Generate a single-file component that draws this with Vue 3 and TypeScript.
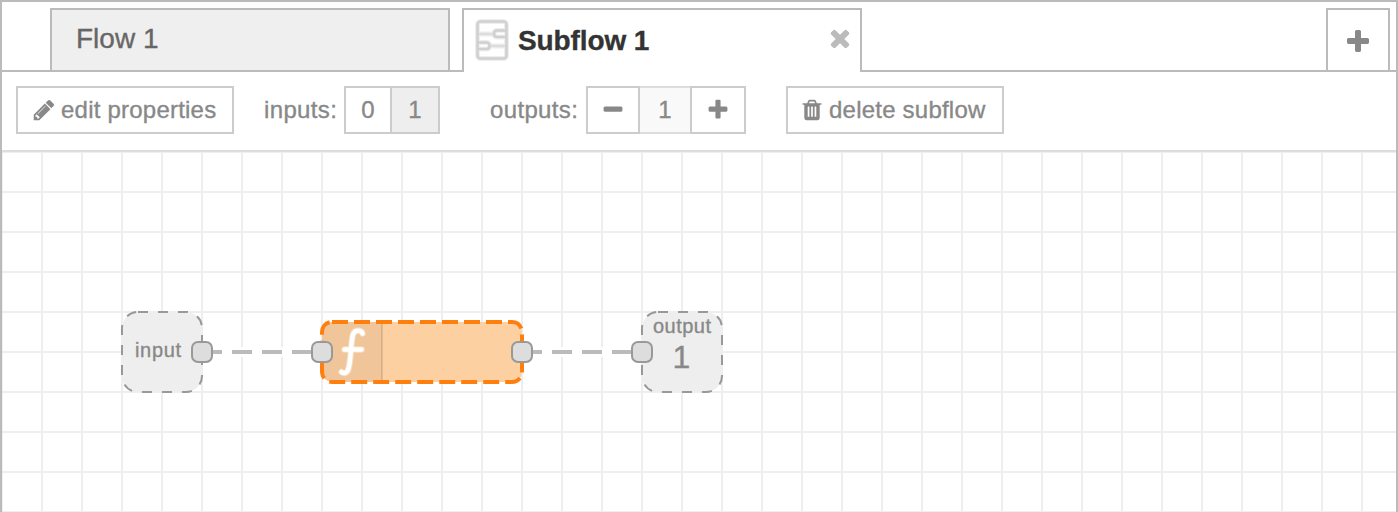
<script setup lang="ts">
import { ref } from 'vue'

interface Port { x: number; y: number }

const inputs = ref(1)
const outputs = ref(1)
const ports: Port[] = [
  { x: 202, y: 352 },
  { x: 322, y: 352 },
  { x: 522, y: 352 },
  { x: 642, y: 352 },
]
const columns = Array.from({ length: 35 }, (_, i) => 2 + i * 40)
const rows = Array.from({ length: 10 }, (_, i) => 152 + i * 40)

const icons = {
  pencil: 'M491 1536l91-91-235-235-91 91v107h128v128h107zm523-928q0-22-22-22-10 0-17 7l-542 542q-7 7-7 17 0 22 22 22 10 0 17-7l542-542q7-7 7-17zm-54-192l416 416-832 832h-416v-416zm683 96q0 53-37 90l-166 166-416-416 166-165q36-38 90-38 53 0 91 38l235 234q37 39 37 91z',
  plus: 'M1600 736v192q0 40-28 68t-68 28h-416v416q0 40-28 68t-68 28h-192q-40 0-68-28t-28-68v-416h-416q-40 0-68-28t-28-68v-192q0-40 28-68t68-28h416v-416q0-40 28-68t68-28h192q40 0 68 28t28 68v416h416q40 0 68 28t28 68z',
  minus: 'M1600 736v192q0 40-28 68t-68 28h-1216q-40 0-68-28t-28-68v-192q0-40 28-68t68-28h1216q40 0 68 28t28 68z',
  times: 'M1490 1322q0 40-28 68l-136 136q-28 28-68 28t-68-28l-294-294-294 294q-28 28-68 28t-68-28l-136-136q-28-28-28-68t28-68l294-294-294-294q-28-28-28-68t28-68l136-136q28-28 68-28t68 28l294 294 294-294q28-28 68-28t68 28l136 136q28 28 28 68t-28 68l-294 294 294 294q28 28 28 68z',
  trash: 'M704 1376v-704q0-14-9-23t-23-9h-64q-14 0-23 9t-9 23v704q0 14 9 23t23 9h64q14 0 23-9t9-23zm256 0v-704q0-14-9-23t-23-9h-64q-14 0-23 9t-9 23v704q0 14 9 23t23 9h64q14 0 23-9t9-23zm256 0v-704q0-14-9-23t-23-9h-64q-14 0-23 9t-9 23v704q0 14 9 23t23 9h64q14 0 23-9t9-23zm-544-992h448l-48-117q-7-9-17-11h-317q-10 2-17 11zm928 32v64q0 14-9 23t-23 9h-96v948q0 83-47 143.500t-113 60.500h-832q-66 0-113-58.500t-47-141.500v-952h-96q-14 0-23-9t-9-23v-64q0-14 9-23t23-9h309l70-167q15-37 54-63t79-26h320q40 0 79 26t54 63l70 167h309q14 0 23 9t9 23z',
}
</script>

<template>
  <div class="workspace">
    <nav class="tabs">
      <div class="tab">
        <span class="tab-label">Flow 1</span>
      </div>
      <div class="tab active">
        <svg class="subflow-icon" viewBox="0 0 36 44">
          <g class="halo">
            <rect x="3.500" y="3.500" width="29" height="37" rx="3" />
            <path d="M4 16h16M16 28h16" />
            <path d="M32 12.500H23q-3 0-3 3.250t3 3.250h9M4 24.500h8.500q3 0 3 3.250t-3 3.250H4" />
          </g>
          <g class="lines">
            <path class="thin" d="M4 16h16M16 28h16" />
            <rect x="3.500" y="3.500" width="29" height="37" rx="3" />
            <path d="M32 12.500H23q-3 0-3 3.250t3 3.250h9M4 24.500h8.500q3 0 3 3.250t-3 3.250H4" />
          </g>
        </svg>
        <span class="tab-label">Subflow 1</span>
        <svg class="icon-lg close" viewBox="0 0 1792 1792"><path :d="icons.times" /></svg>
      </div>
      <button class="add">
        <svg class="icon-lg" viewBox="0 0 1792 1792"><path :d="icons.plus" /></svg>
      </button>
    </nav>

    <div class="toolbar">
      <button class="btn edit">
        <svg class="icon" viewBox="0 0 1792 1792"><path :d="icons.pencil" /></svg>
        <span class="edit-text">edit properties</span>
      </button>
      <span class="label inputs-label">inputs:</span>
      <div class="group">
        <button class="cell zero" :class="{ selected: inputs === 0 }" @click="inputs = 0">0</button>
        <button class="cell one" :class="{ selected: inputs === 1 }" @click="inputs = 1">1</button>
      </div>
      <span class="label outputs-label">outputs:</span>
      <div class="group">
        <button class="cell minus" @click="outputs = Math.max(0, outputs - 1)">
          <svg class="icon" viewBox="0 0 1792 1792"><path :d="icons.minus" /></svg>
        </button>
        <span class="count">{{ outputs }}</span>
        <button class="cell plus" @click="outputs++">
          <svg class="icon" viewBox="0 0 1792 1792"><path :d="icons.plus" /></svg>
        </button>
      </div>
      <button class="btn delete">
        <svg class="icon" viewBox="0 0 1792 1792"><path :d="icons.trash" /></svg>
        <span class="delete-text">delete subflow</span>
      </button>
    </div>

    <svg class="canvas" viewBox="2 152 1394 360">
      <g class="grid">
        <line v-for="x in columns" :key="'c' + x" :x1="x" :x2="x" y1="151" y2="512" />
        <line v-for="y in rows" :key="'r' + y" :y1="y" :y2="y" x1="0" x2="1398" />
      </g>
      <path class="link-back" d="M202 352H322M522 352H642" />
      <path class="link" d="M202 352H322M522 352H642" />

      <rect class="terminal" x="122" y="312" width="80" height="80" rx="16" />
      <text class="terminal-label" x="135" y="357" textLength="46">input</text>

      <rect class="node" x="322" y="322" width="200" height="60" rx="10" />
      <path class="node-shade" d="M382 322v60H332a10 10 0 0 1-10-10V332a10 10 0 0 1 10-10z" />
      <path class="node-divider" d="M382 324v56" />
      <g class="fn">
        <path class="fn-halo" d="M362.500 333.500c-1-3-7.500-4.500-9.500 1c-2 6-2 23-4 32c-1 7-5 7.500-7.500 5.500M344.500 349.500h17" />
        <path d="M362.500 333.500c-1-3-7.500-4.500-9.500 1c-2 6-2 23-4 32c-1 7-5 7.500-7.500 5.500M344.500 349.500h17" />
      </g>
      <rect class="node-outline" x="322" y="322" width="200" height="60" rx="10" />

      <rect class="terminal" x="642" y="312" width="80" height="80" rx="16" />
      <text class="terminal-label" x="653" y="333" textLength="58">output</text>
      <text class="terminal-index" x="681.500" y="368">1</text>

      <rect v-for="p in ports" :key="p.x" class="port" :x="p.x - 10" :y="p.y - 10" width="20" height="20" rx="6" />
    </svg>
  </div>
</template>

<style>
body {
  margin: 0;
  background: #fff;
}
</style>

<style scoped>
.workspace {
  box-sizing: border-box;
  width: 1398px;
  height: 512px;
  border: 2px solid #bbb;
  border-bottom: 0;
  display: flex;
  flex-direction: column;
  overflow: hidden;
  background: #fff;
  font-family: "Liberation Sans", Arial, sans-serif;
  -webkit-text-stroke: 0.350px currentColor;
}
button {
  margin: 0;
  padding: 0;
  font: inherit;
  color: inherit;
  background: #fff;
  box-sizing: border-box;
}
svg {
  display: block;
  flex: none;
}
.tabs {
  box-sizing: border-box;
  height: 70px;
  flex: none;
  display: flex;
  align-items: flex-start;
  padding: 6px 6px 0 48px;
  border-bottom: 2px solid #bbb;
  font-size: 28px;
}
.tab {
  box-sizing: border-box;
  width: 400px;
  height: 62px;
  margin-right: 12px;
  padding-left: 24px;
  border: 2px solid #bbb;
  border-bottom: 0;
  background: #efefef;
  color: #666;
  display: flex;
  align-items: center;
}
.tab-label {
  line-height: 32px;
  padding-bottom: 2px;
}
.tab.active {
  height: 64px;
  padding: 0 6px 0 10px;
  background: #fff;
  color: #333;
  font-weight: bold;
}
.tab.active .tab-label {
  margin-left: 8px;
  padding-bottom: 0;
  letter-spacing: -0.100px;
}
.subflow-icon {
  width: 36px;
  height: 44px;
  margin-bottom: 2px;
  fill: none;
}
.halo {
  stroke: #eee;
  stroke-width: 5;
}
.lines {
  stroke: #d0d0d0;
  stroke-width: 2.500;
}
.thin {
  stroke: #ddd;
}
.icon {
  width: 24px;
  height: 24px;
  fill: #888;
}
.icon-lg {
  width: 28px;
  height: 28px;
  fill: #888;
}
.close {
  fill: #bbb;
  margin: 0 0 6px auto;
}
.add {
  width: 64px;
  height: 62px;
  margin-left: auto;
  border: 2px solid #bbb;
  border-bottom: 0;
  padding: 18px 16px 14px;
}
.toolbar {
  box-sizing: border-box;
  height: 80px;
  flex: none;
  display: flex;
  align-items: flex-start;
  padding: 14px 14px 0;
  border-bottom: 2px solid #ddd;
  color: #888;
  font-size: 24px;
  line-height: 44px;
}
.btn {
  width: 218px;
  height: 48px;
  border: 2px solid #ccc;
  display: flex;
  align-items: center;
  padding-left: 14px;
  white-space: nowrap;
}
.edit-text {
  margin-left: 5px;
  letter-spacing: 0.220px;
}
.delete {
  margin-left: 40px;
  padding-left: 12px;
}
.delete-text {
  margin-left: 5px;
  letter-spacing: 0.220px;
}
.label {
  padding-top: 2px;
  box-sizing: border-box;
  white-space: nowrap;
  letter-spacing: 0.350px;
}
.inputs-label {
  width: 80px;
  margin-left: 30px;
}
.outputs-label {
  width: 96px;
  margin-left: 50px;
}
.group {
  display: flex;
  height: 48px;
}
.cell {
  height: 48px;
  border: 2px solid #ccc;
  display: flex;
  align-items: center;
  justify-content: center;
}
.zero {
  width: 48px;
}
.one {
  width: 48px;
  border-left: 0;
}
.selected {
  background: #eee;
}
.minus {
  width: 54px;
}
.plus {
  width: 56px;
}
.count {
  box-sizing: border-box;
  width: 50px;
  text-align: center;
  background: #f9f9f9;
  border: 2px solid #ddd;
  border-width: 2px 0;
}
.canvas {
  width: 1394px;
  height: 360px;
}
.grid {
  stroke: #eee;
  stroke-width: 2;
}
.link-back {
  stroke: #fff;
  stroke-width: 10;
}
.link {
  stroke: #bbb;
  stroke-width: 4;
  stroke-dasharray: 20 10;
}
.terminal {
  fill: #eee;
  stroke: #999;
  stroke-width: 2;
  stroke-dasharray: 10 10;
}
.terminal-label {
  fill: #888;
  font-size: 20px;
}
.terminal-index {
  fill: #888;
  font-size: 32px;
  text-anchor: middle;
}
.terminal-label,
.terminal-index {
  -webkit-text-stroke: 0;
  stroke: #888;
  stroke-width: 0.350px;
}
.node {
  fill: #fdd0a2;
}
.node-shade {
  fill: #000;
  fill-opacity: 0.050;
}
.node-divider {
  stroke: #000;
  stroke-opacity: 0.100;
  stroke-width: 2;
}
.node-outline {
  fill: none;
  stroke: #ff7f0e;
  stroke-width: 4;
  stroke-dasharray: 16 6;
}
.fn {
  fill: none;
  stroke: #fff;
  stroke-width: 4.500;
  stroke-linecap: round;
}
.fn-halo {
  stroke-width: 6.500;
  stroke-opacity: 0.400;
}
.port {
  fill: #ddd;
  stroke: #999;
  stroke-width: 2;
}
</style>
